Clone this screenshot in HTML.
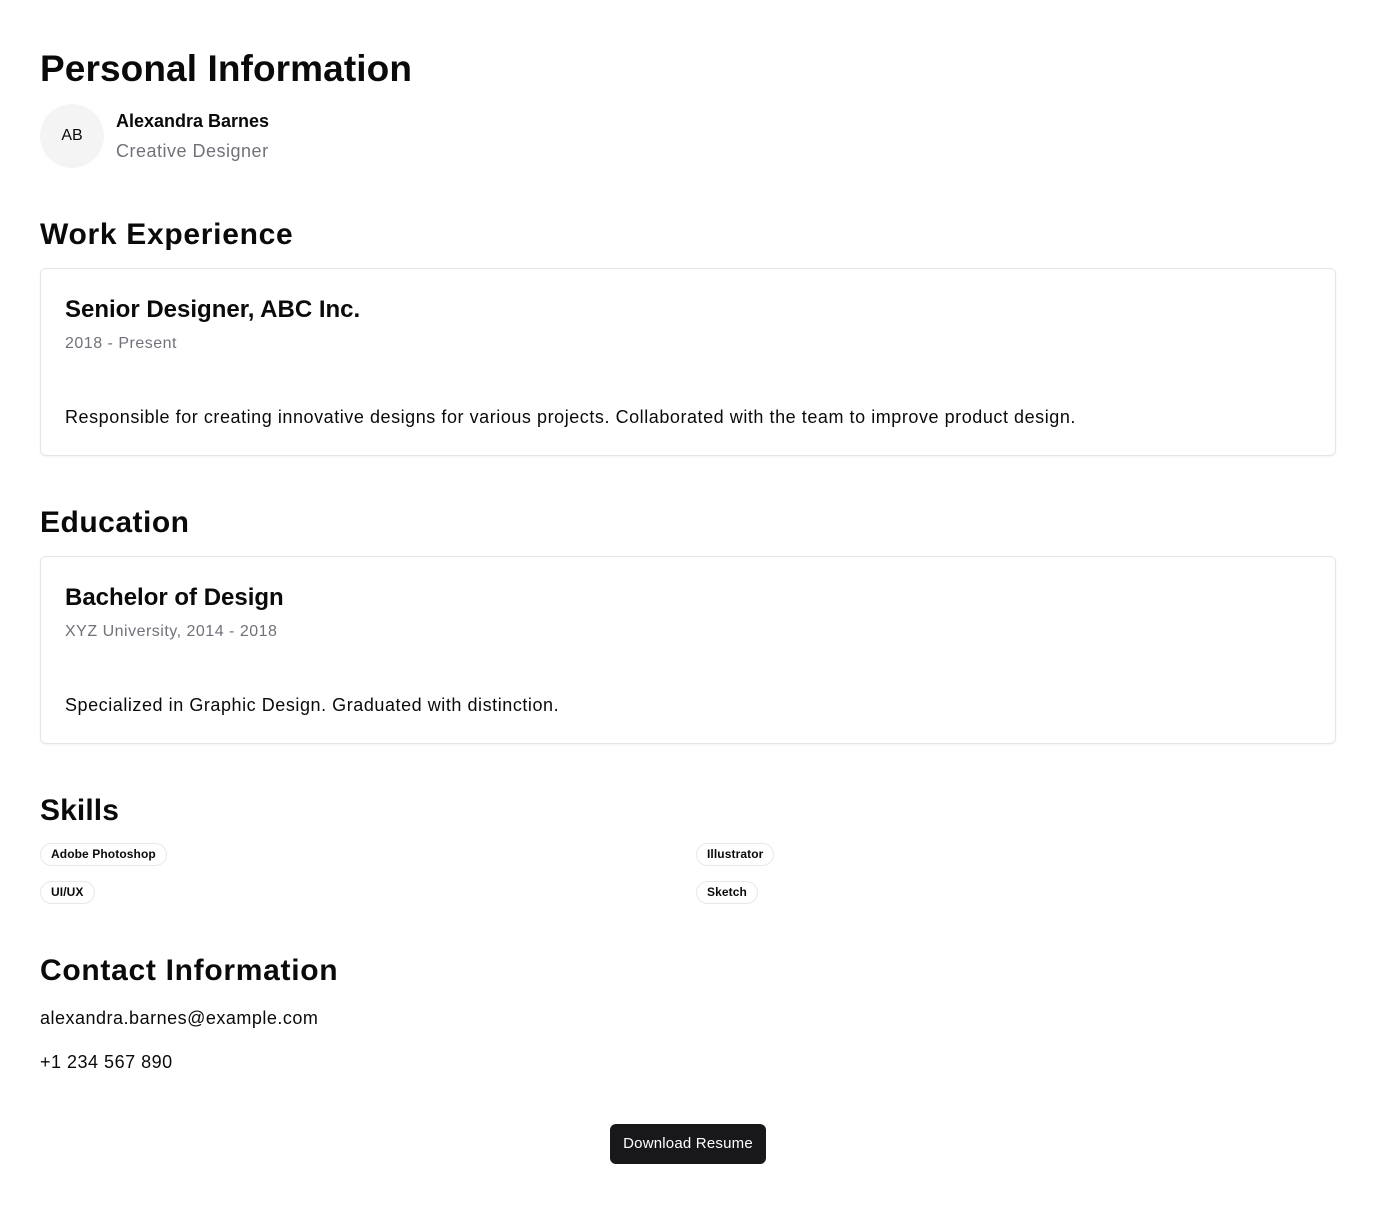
<!DOCTYPE html>
<html><head><meta charset="utf-8"><style>
*{margin:0;padding:0;box-sizing:border-box}
body{width:1376px;height:1212px;background:#fff;font-family:"Liberation Sans",sans-serif;color:#0a0a0a;position:relative;overflow:hidden;letter-spacing:0.5px}
.a{position:absolute;white-space:nowrap}
h1,h2{font-weight:700;letter-spacing:0.1px}
.card{position:absolute;left:40px;width:1296px;border:1px solid #e5e5e5;border-radius:6px;box-shadow:0 1px 2px rgba(0,0,0,0.05)}
.pill{position:absolute;height:23px;line-height:21px;border:1px solid #e8e8e8;border-radius:12px;padding:0 10px;font-size:12px;font-weight:700;letter-spacing:0.1px}
.btn{position:absolute;left:610px;top:1124px;width:156px;height:40px;background:#18181b;border-radius:6px;color:#fff;font-size:15px;text-align:center;line-height:40px;letter-spacing:0.2px}
</style></head><body>
<h1 class="a" style="left:40px;top:47px;font-size:37px;line-height:44px">Personal Information</h1>
<div class="a" style="left:40px;top:104px;width:64px;height:64px;border-radius:50%;background:#f4f4f5;text-align:center;line-height:64px;font-size:16px;letter-spacing:0">AB</div>
<div class="a" style="left:116px;top:110px;font-size:18px;font-weight:700;line-height:22px;letter-spacing:0">Alexandra Barnes</div>
<div class="a" style="left:116px;top:140px;font-size:18px;color:#71717a;line-height:22px">Creative Designer</div>

<h2 class="a" style="left:40px;top:216px;font-size:30px;line-height:38px;letter-spacing:0.7px">Work Experience</h2>
<div class="card" style="top:268px;height:188px"></div>
<div class="a" style="left:65px;top:295px;font-size:24px;font-weight:700;line-height:30px;letter-spacing:0">Senior Designer, ABC Inc.</div>
<div class="a" style="left:65px;top:334px;font-size:16px;color:#71717a;line-height:20px">2018 - Present</div>
<div class="a" style="left:65px;top:406px;font-size:18px;line-height:22px;letter-spacing:0.55px">Responsible for creating innovative designs for various projects. Collaborated with the team to improve product design.</div>

<h2 class="a" style="left:40px;top:504px;font-size:30px;line-height:38px;letter-spacing:0.5px">Education</h2>
<div class="card" style="top:556px;height:188px"></div>
<div class="a" style="left:65px;top:583px;font-size:24px;font-weight:700;line-height:30px;letter-spacing:0">Bachelor of Design</div>
<div class="a" style="left:65px;top:622px;font-size:16px;color:#71717a;line-height:20px">XYZ University, 2014 - 2018</div>
<div class="a" style="left:65px;top:694px;font-size:18px;line-height:22px;letter-spacing:0.55px">Specialized in Graphic Design. Graduated with distinction.</div>

<h2 class="a" style="left:40px;top:792px;font-size:30px;line-height:38px">Skills</h2>
<div class="pill" style="left:40px;top:843px">Adobe Photoshop</div>
<div class="pill" style="left:696px;top:843px">Illustrator</div>
<div class="pill" style="left:40px;top:881px">UI/UX</div>
<div class="pill" style="left:696px;top:881px">Sketch</div>

<h2 class="a" style="left:40px;top:952px;font-size:30px;line-height:38px;letter-spacing:0.7px">Contact Information</h2>
<div class="a" style="left:40px;top:1007px;font-size:18px;line-height:22px">alexandra.barnes@example.com</div>
<div class="a" style="left:40px;top:1051px;font-size:18px;line-height:22px">+1 234 567 890</div>

<div class="btn">Download Resume</div>
</body></html>
